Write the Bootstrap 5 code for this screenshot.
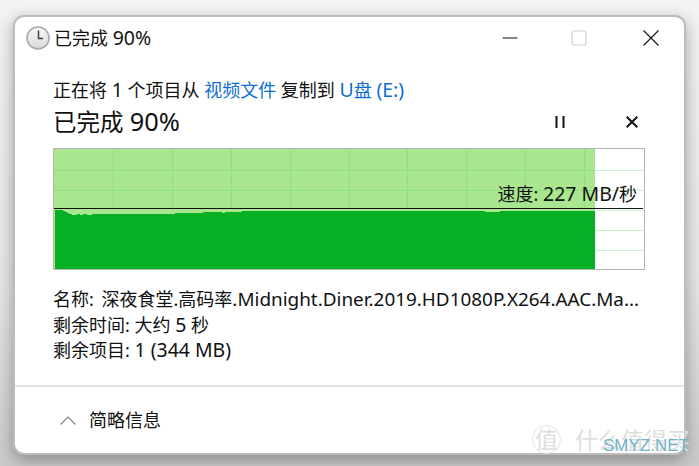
<!DOCTYPE html>
<html lang="zh-CN">
<head>
<meta charset="utf-8">
<title>已完成 90%</title>
<link rel="stylesheet" href="https://cdn.jsdelivr.net/npm/bootstrap@5.3.0/dist/css/bootstrap.min.css">
<style>
html,body{height:100%;}
body{margin:0;width:699px;height:466px;overflow:hidden;background:linear-gradient(180deg,#f3f3f3 0,#e6e6e6 60%,#c9c9c9 100%);padding:15px 13px 13px 13px;font-family:"Noto Sans","Noto Sans CJK SC",sans-serif;color:#111;font-size:18px;line-height:26px;}
.lat{font-size:1.08em;}
.lat-name{font-size:1.05em;}
.copy-win{position:relative;height:440px;width:673px;background:#fff;border:2px solid #bcbcbc;border-radius:11px;box-shadow:0 5px 16px rgba(0,0,0,.32);overflow:hidden;}
.win-title{height:41px;padding-left:8px;gap:1px;font-size:18px;}
.win-btns{margin-left:auto;margin-right:-3px;}
.win-btn{width:72px;height:41px;}
.win-min{margin-right:-3px;}
.copy-body{padding:19px 40px 0 38px;height:329px;border-bottom:2px solid #e3e3e3;}
.copy-head{font-size:23.5px;line-height:32px;margin-top:2px;}
.copy-link{color:#0b6fd4;text-decoration:none;}
.act-btns{margin-right:-24px;}
.act-btn{width:72px;}
.chart-box{position:relative;width:592px;height:122px;border:1px solid #b5b5b5;margin-top:10px;}
.chart-box svg{display:block;}
.speed-label{position:absolute;right:7px;top:32px;}
.info-lines{margin-top:16px;width:592px;}
.info-line{white-space:nowrap;overflow:hidden;height:25.5px;}
.name-gap{margin-left:3px;}
.foot-bar{height:66px;padding-left:45px;gap:13px;}
.wm-cn{position:absolute;left:532px;top:425px;font-size:23px;line-height:30px;color:#dedede;white-space:nowrap;}
.wm-ring{display:inline-block;width:29px;height:29px;border:1px solid #e4e4e4;border-radius:50%;text-align:center;line-height:26px;margin-right:14px;vertical-align:top;}
.wm-en{position:absolute;left:603px;top:436px;font-family:"Liberation Sans",sans-serif;font-size:17px;line-height:20px;color:#6fb5c9;white-space:nowrap;}
</style>
</head>
<body>
<div class="copy-win">
  <div class="win-title d-flex align-items-center">
    <svg width="30" height="30" viewBox="0 0 30 30">
      <defs><linearGradient id="cg" x1="0" y1="0" x2="0" y2="1"><stop offset="0" stop-color="#fafafa"/><stop offset="1" stop-color="#d8d8d8"/></linearGradient></defs>
      <circle cx="15" cy="15" r="11" fill="url(#cg)" stroke="#a8a8a8" stroke-width="1.6"/>
      <path d="M15.5 7.500V15.500H20" fill="none" stroke="#444" stroke-width="1.5"/>
    </svg>
    <span>已完成 <span class="lat">90%</span></span>
    <div class="win-btns d-flex">
      <div class="win-btn win-min d-flex align-items-center justify-content-center"><svg width="16" height="16" viewBox="0 0 16 16"><path d="M0.500 8H15.500" stroke="#111" stroke-width="1"/></svg></div>
      <div class="win-btn d-flex align-items-center justify-content-center"><svg width="16" height="16" viewBox="0 0 16 16"><rect x="1" y="1" width="14" height="14" rx="2" fill="none" stroke="#cfcfcf" stroke-width="1.2"/></svg></div>
      <div class="win-btn d-flex align-items-center justify-content-center"><svg width="16" height="16" viewBox="0 0 16 16"><path d="M.5.500L15.500 15.500M15.500.500L.5 15.500" stroke="#111" stroke-width="1.1"/></svg></div>
    </div>
  </div>
  <div class="copy-body">
    <div>正在将 <span class="lat">1</span> 个项目从 <a class="copy-link" href="#">视频文件</a> 复制到 <a class="copy-link" href="#"><span class="lat">U</span>盘 <span class="lat">(E:)</span></a></div>
    <div class="d-flex align-items-center copy-head">
      <span>已完成 <span class="lat">90%</span></span>
      <div class="ms-auto d-flex act-btns">
        <div class="act-btn d-flex justify-content-center"><svg width="12" height="12" viewBox="0 0 12 12"><path d="M2.500 0V12M9.500 0V12" stroke="#111" stroke-width="2"/></svg></div>
        <div class="act-btn d-flex justify-content-center"><svg width="12" height="12" viewBox="0 0 12 12"><path d="M.7.7L11.300 11.300M11.300.7L.7 11.300" stroke="#111" stroke-width="2"/></svg></div>
      </div>
    </div>
    <div class="chart-box">
      <svg width="590" height="120" viewBox="0 0 590 120" shape-rendering="crispEdges">
        <path d="M0 21.500H590M0 41.500H590M0 61.500H590M0 81.500H590M0 101.500H590" stroke="#c8f0cc"/>
        <rect x="0" y="0" width="541" height="120" fill="#a9e68f"/>
        <path d="M0 21.500H541M0 41.500H541" stroke="#8ee27c"/>
        <path d="M59.500 0V59M118.500 0V59M177.500 0V59M236.500 0V59M295.500 0V59M353.500 0V59M412.500 0V59M471.500 0V59M530.500 0V59" stroke="#8ee27c"/>
        <path d="M1 61H9V62H11V63H13V64H15V65H18V66H23V65H26V66H29V65H33V66H38V65H121V64H149V63H168V64H171V63H188V62H431V63H446V62H541V120H1Z" fill="#06b025"/>
        <rect x="0" y="59" width="589" height="1" fill="#111"/>
      </svg>
      <div class="speed-label">速度: <span class="lat">227 MB/</span>秒</div>
    </div>
    <div class="info-lines">
      <div class="info-line">名称:<span class="name-gap"> 深夜食堂.高码率</span><span class="lat-name">.Midnight.Diner.2019.HD1080P.X264.AAC.Ma...</span></div>
      <div class="info-line">剩余时间: 大约 <span class="lat">5</span> 秒</div>
      <div class="info-line">剩余项目: <span class="lat">1 (344 MB)</span></div>
    </div>
  </div>
  <div class="foot-bar d-flex align-items-center">
    <svg width="16" height="9" viewBox="0 0 16 9"><path d="M.5 8.500L8 1L15.500 8.500" fill="none" stroke="#888" stroke-width="1.2"/></svg>
    <span>简略信息</span>
  </div>
</div>
<div class="wm-cn"><span class="wm-ring">值</span>什么值得买</div>
<div class="wm-en">SMYZ.NET</div>
<script src="https://cdn.jsdelivr.net/npm/bootstrap@5.3.0/dist/js/bootstrap.bundle.min.js"></script>
</body>
</html>
